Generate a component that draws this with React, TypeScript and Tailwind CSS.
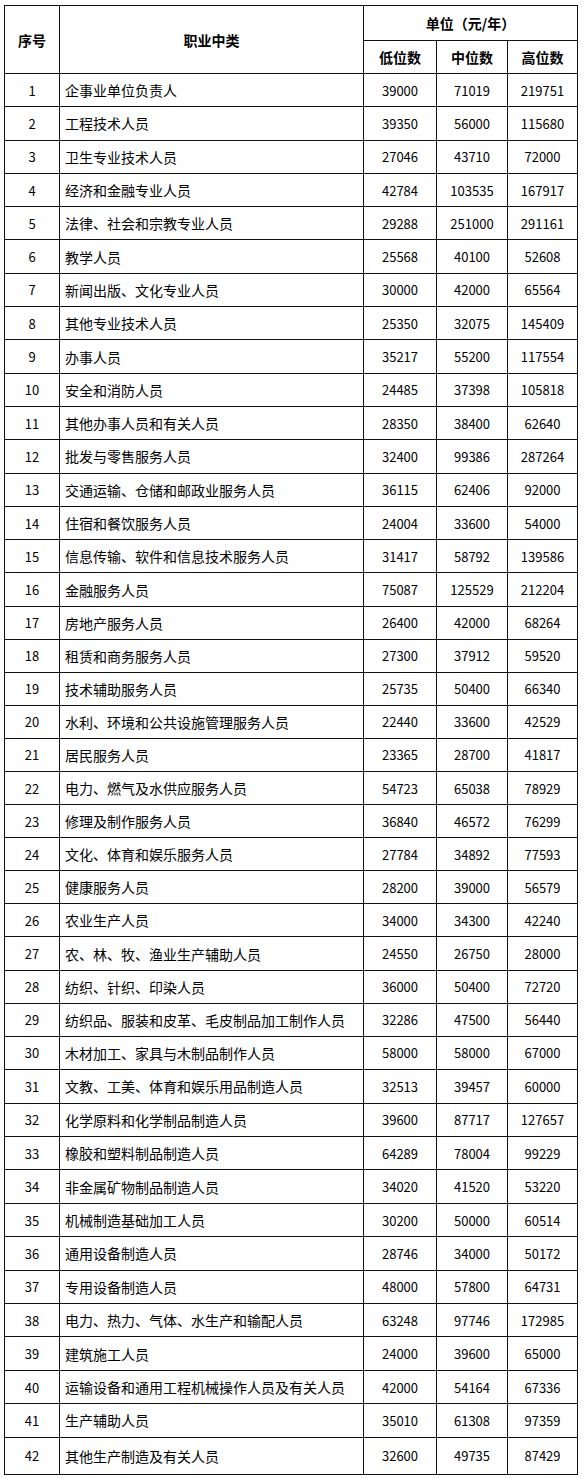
import React from "react";

const rows: [string, number, number, number][] = [
  ["企事业单位负责人", 39000, 71019, 219751],
  ["工程技术人员", 39350, 56000, 115680],
  ["卫生专业技术人员", 27046, 43710, 72000],
  ["经济和金融专业人员", 42784, 103535, 167917],
  ["法律、社会和宗教专业人员", 29288, 251000, 291161],
  ["教学人员", 25568, 40100, 52608],
  ["新闻出版、文化专业人员", 30000, 42000, 65564],
  ["其他专业技术人员", 25350, 32075, 145409],
  ["办事人员", 35217, 55200, 117554],
  ["安全和消防人员", 24485, 37398, 105818],
  ["其他办事人员和有关人员", 28350, 38400, 62640],
  ["批发与零售服务人员", 32400, 99386, 287264],
  ["交通运输、仓储和邮政业服务人员", 36115, 62406, 92000],
  ["住宿和餐饮服务人员", 24004, 33600, 54000],
  ["信息传输、软件和信息技术服务人员", 31417, 58792, 139586],
  ["金融服务人员", 75087, 125529, 212204],
  ["房地产服务人员", 26400, 42000, 68264],
  ["租赁和商务服务人员", 27300, 37912, 59520],
  ["技术辅助服务人员", 25735, 50400, 66340],
  ["水利、环境和公共设施管理服务人员", 22440, 33600, 42529],
  ["居民服务人员", 23365, 28700, 41817],
  ["电力、燃气及水供应服务人员", 54723, 65038, 78929],
  ["修理及制作服务人员", 36840, 46572, 76299],
  ["文化、体育和娱乐服务人员", 27784, 34892, 77593],
  ["健康服务人员", 28200, 39000, 56579],
  ["农业生产人员", 34000, 34300, 42240],
  ["农、林、牧、渔业生产辅助人员", 24550, 26750, 28000],
  ["纺织、针织、印染人员", 36000, 50400, 72720],
  ["纺织品、服装和皮革、毛皮制品加工制作人员", 32286, 47500, 56440],
  ["木材加工、家具与木制品制作人员", 58000, 58000, 67000],
  ["文教、工美、体育和娱乐用品制造人员", 32513, 39457, 60000],
  ["化学原料和化学制品制造人员", 39600, 87717, 127657],
  ["橡胶和塑料制品制造人员", 64289, 78004, 99229],
  ["非金属矿物制品制造人员", 34020, 41520, 53220],
  ["机械制造基础加工人员", 30200, 50000, 60514],
  ["通用设备制造人员", 28746, 34000, 50172],
  ["专用设备制造人员", 48000, 57800, 64731],
  ["电力、热力、气体、水生产和输配人员", 63248, 97746, 172985],
  ["建筑施工人员", 24000, 39600, 65000],
  ["运输设备和通用工程机械操作人员及有关人员", 42000, 54164, 67336],
  ["生产辅助人员", 35010, 61308, 97359],
  ["其他生产制造及有关人员", 32600, 49735, 87429],
];

// the scanned table isn't perfectly even, rows drift a little
function rowHeight(i: number) {
  if (i < 15) return 33.3;
  if (i < 29) return 33.1;
  if (i < 41) return 33.42;
  return 37.3;
}

const cell = "border border-[#111]";

export default function App() {
  return (
    <div
      className="w-[584px] h-[1479px] bg-white pl-[4px] pt-[5px] text-black"
      style={{ fontFamily: '"Noto Sans CJK SC", "Liberation Sans", sans-serif' }}
    >
      <table className="table-fixed border-collapse w-[573px] text-[14px] leading-none">
        <colgroup>
          <col className="w-[55px]" />
          <col className="w-[304px]" />
          <col className="w-[73px]" />
          <col className="w-[71px]" />
          <col className="w-[70px]" />
        </colgroup>
        <thead>
          <tr className="h-[35px]">
            <th rowSpan={2} className={`${cell} font-bold text-center`}>序号</th>
            <th rowSpan={2} className={`${cell} font-bold text-center`}>职业中类</th>
            <th colSpan={3} className={`${cell} font-bold text-center`}>单位（元/年）</th>
          </tr>
          <tr className="h-[33px]">
            <th className={`${cell} font-bold text-center`}>低位数</th>
            <th className={`${cell} font-bold text-center`}>中位数</th>
            <th className={`${cell} font-bold text-center`}>高位数</th>
          </tr>
        </thead>
        <tbody>
          {rows.map(([name, lo, mid, hi], i) => (
            <tr key={i} style={{ height: rowHeight(i) }}>
              <td className={`${cell} text-center text-[13px]`}>{i + 1}</td>
              <td className={`${cell} pl-[5px] whitespace-nowrap`}>{name}</td>
              <td className={`${cell} text-center text-[13px]`}>{lo}</td>
              <td className={`${cell} text-center text-[13px]`}>{mid}</td>
              <td className={`${cell} text-center text-[13px]`}>{hi}</td>
            </tr>
          ))}
        </tbody>
      </table>
    </div>
  );
}
